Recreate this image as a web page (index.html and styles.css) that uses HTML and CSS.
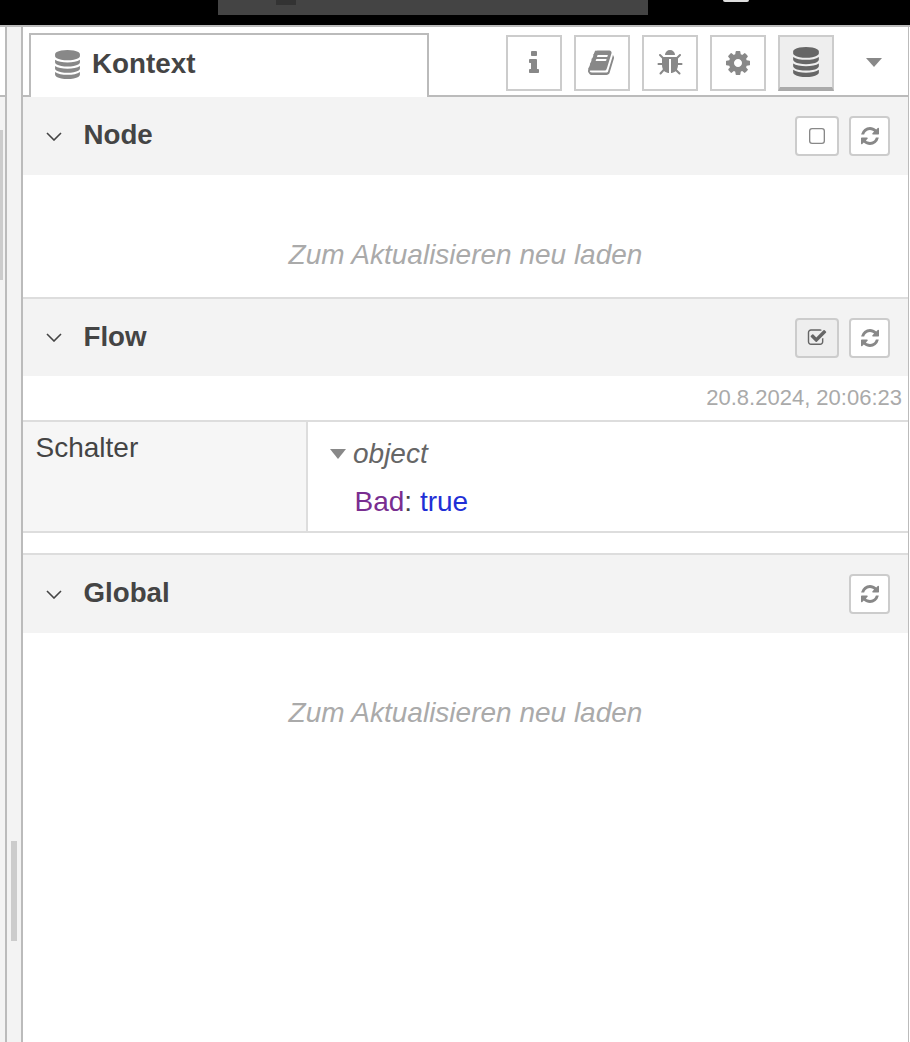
FILE: index.html
```html
<!DOCTYPE html>
<html lang="de">
<head>
<meta charset="utf-8">
<title>Kontext</title>
<link rel="stylesheet" href="styles.css">
</head>
<body>
<svg class="sprite" aria-hidden="true">
  <symbol id="i-db" viewBox="0 0 1536 1792"><path d="M768 768q237 0 443-43t325-127v170q0 69-103 128t-280 93.5-385 34.5-385-34.5-280-93.5-103-128v-170q119 84 325 127t443 43zm0 768q237 0 443-43t325-127v170q0 69-103 128t-280 93.5-385 34.5-385-34.5-280-93.5-103-128v-170q119 84 325 127t443 43zm0-384q237 0 443-43t325-127v170q0 69-103 128t-280 93.5-385 34.5-385-34.5-280-93.5-103-128v-170q119 84 325 127t443 43zm0-1152q208 0 385 34.5t280 93.5 103 128v128q0 69-103 128t-280 93.5-385 34.5-385-34.5-280-93.5-103-128v-128q0-69 103-128t280-93.5 385-34.5z"/></symbol>
  <symbol id="i-info" viewBox="576 0 704 1792"><path d="M1216 1344v128q0 26-19 45t-45 19h-512q-26 0-45-19t-19-45v-128q0-26 19-45t45-19h64v-384h-64q-26 0-45-19t-19-45v-128q0-26 19-45t45-19h384q26 0 45 19t19 45v576h64q26 0 45 19t19 45zm-128-1152v192q0 26-19 45t-45 19h-256q-26 0-45-19t-19-45v-192q0-26 19-45t45-19h256q26 0 45 19t19 45z"/></symbol>
  <symbol id="i-book" viewBox="0 0 1792 1792"><path d="M1639 478q40 57 18 129l-275 906q-19 64-76.5 107.5t-122.5 43.5h-923q-77 0-148.5-53.5t-99.5-131.5q-24-67-2-127 0-4 3-27t4-37q1-8-3-21.5t-3-19.5q2-11 8-21t16.5-23.5 16.5-23.5q23-38 45-91.5t30-91.5q3-10 .5-30t-.5-28q3-11 17-28t17-23q21-36 42-92t25-90q1-9-2.5-32t.5-28q4-13 22-30.5t22-22.5q19-26 42.5-84.5t27.5-96.5q1-8-3-25.5t-2-26.5q2-8 9-18t18-23 17-21q8-12 16.5-35t15-43.5 16-44.5 19.5-36 27-25.5 36-12.5 46.5 4.5l-1 2q39-9 52-9h761q74 0 114 56t18 130l-274 906q-36 119-71.5 153.5t-128.5 34.5h-869q-27 0-38 15-11 16-1 43 24 70 144 70h923q29 0 56-15.5t35-41.5l300-987q7-22 5-57 38 15 59 43zm-1064 2q-4 13 2 22.5t20 9.5h608q13 0 25.5-9.5t16.5-22.5l21-64q4-13-2-22.5t-20-9.5h-608q-13 0-25.5 9.5t-16.5 22.5zm-83 256q-4 13 2 22.5t20 9.5h608q13 0 25.5-9.5t16.5-22.5l21-64q4-13-2-22.5t-20-9.5h-608q-13 0-25.5 9.5t-16.5 22.5z"/></symbol>
  <symbol id="i-bug" viewBox="0 0 1792 1792"><path d="M1696 960q0 26-19 45t-45 19h-224q0 171-67 290l208 209q19 19 19 45t-19 45q-18 19-45 19t-45-19l-198-197q-5 5-15 13t-42 28.5-65 36.5-82 29-97 13v-896h-128v896q-51 0-101.5-13.5t-87-33-66-39-43.5-32.5l-15-14-183 207q-20 21-48 21-24 0-43-16-19-18-20.5-44.5t15.5-46.5l202-227q-58-114-58-274h-224q-26 0-45-19t-19-45 19-45 45-19h224v-294l-173-173q-19-19-19-45t19-45 45-19 45 19l173 173h844l173-173q19-19 45-19t45 19 19 45-19 45l-173 173v294h224q26 0 45 19t19 45zm-480-576h-640q0-133 93.5-226.5t226.5-93.5 226.5 93.5 93.5 226.5z"/></symbol>
  <symbol id="i-cog" viewBox="128 128 1536 1536"><path d="M1152 896q0-106-75-181t-181-75-181 75-75 181 75 181 181 75 181-75 75-181zm512-109v222q0 12-8 23t-20 13l-185 28q-19 54-39 91 35 50 107 138 10 12 10 25t-9 23q-27 37-99 108t-94 71q-12 0-26-9l-138-108q-44 23-91 38-16 136-29 186-7 28-36 28h-222q-14 0-24.5-8.5t-11.5-21.5l-28-184q-49-16-90-37l-141 107q-10 9-25 9-14 0-25-11-126-114-165-168-7-10-7-23 0-12 8-23 15-21 51-66.5t54-70.5q-27-50-41-99l-183-27q-13-2-21-12.5t-8-23.5v-222q0-12 8-23t19-13l186-28q14-46 39-92-40-57-107-138-10-12-10-24 0-10 9-23 26-36 98.5-107.5t94.5-71.5q13 0 26 10l138 107q44-23 91-38 16-136 29-186 7-28 36-28h222q14 0 24.5 8.5t11.5 21.5l28 184q49 16 90 37l142-107q9-9 24-9 13 0 25 10 129 119 165 170 7 8 7 22 0 12-8 23-15 21-51 66.5t-54 70.5q26 50 41 98l183 28q13 2 21 12.5t8 23.5z"/></symbol>
  <symbol id="i-refresh" viewBox="128 128 1536 1536"><path d="M1639 1056q0 5-1 7-64 268-268 434.5t-478 166.5q-146 0-282.5-55t-243.5-157l-129 129q-19 19-45 19t-45-19-19-45v-448q0-26 19-45t45-19h448q26 0 45 19t19 45-19 45l-137 137q71 66 161 102t187 36q134 0 250-65t186-179q11-17 53-117 8-23 30-23h192q13 0 22.5 9.5t9.5 22.5zm25-800v448q0 26-19 45t-45 19h-448q-26 0-45-19t-19-45 19-45l138-138q-148-137-349-137-134 0-250 65t-186 179q-11 17-53 117-8 23-30 23h-199q-13 0-22.5-9.5t-9.5-22.5v-7q65-268 270-434.5t480-166.5q146 0 284 55.5t245 156.5l130-129q19-19 45-19t45 19 19 45z"/></symbol>
  <symbol id="i-square" viewBox="128 128 1536 1536"><rect x="192" y="192" width="1408" height="1408" rx="230" fill="none" stroke="currentColor" stroke-width="128"/></symbol>
  <symbol id="i-check" viewBox="0 96 1792 1536"><path d="M1472 930v318q0 119-84.5 203.5t-203.5 84.5h-832q-119 0-203.5-84.5t-84.5-203.5v-832q0-119 84.5-203.5t203.5-84.5h832q63 0 117 25 15 7 18 23 3 17-9 29l-49 49q-10 10-23 10-3 0-9-2-23-6-45-6h-832q-66 0-113 47t-47 113v832q0 66 47 113t113 47h832q66 0 113-47t47-113v-254q0-13 9-22l64-64q10-10 23-10 6 0 12 3 20 8 20 29zm231-489l-814 814q-24 24-57 24t-57-24l-430-430q-24-24-24-57t24-57l110-110q24-24 57-24t57 24l263 263 647-647q24-24 57-24t57 24l110 110q24 24 24 57t-24 57z"/></symbol>
</svg>

<header class="topbar">
  <div class="window-bar"><span class="window-knob"></span></div>
  <span class="top-pill"></span>
</header>

<div class="workspace">
  <aside class="left-edge">
    <div class="edge-top"></div>
    <div class="edge-bottom"><span class="edge-thumb"></span></div>
  </aside>
  <div class="separator"><span class="separator-thumb"></span></div>

  <main class="panel">
    <nav class="tabbar">
      <div class="tab">
        <svg class="tab-icon"><use href="#i-db"/></svg>
        <span class="tab-label">Kontext</span>
      </div>
      <div class="tab-buttons">
        <button class="tab-btn"><svg class="icon-info"><use href="#i-info"/></svg></button>
        <button class="tab-btn"><svg class="icon-book"><use href="#i-book"/></svg></button>
        <button class="tab-btn"><svg class="icon-bug"><use href="#i-bug"/></svg></button>
        <button class="tab-btn"><svg class="icon-cog"><use href="#i-cog"/></svg></button>
        <button class="tab-btn tab-btn-active"><svg class="icon-db"><use href="#i-db"/></svg></button>
        <span class="tab-caret"></span>
      </div>
    </nav>

    <section class="section">
      <header class="section-head">
        <svg class="chevron" viewBox="0 0 16 9"><path d="M1 1l7 7 7-7"/></svg>
        <h2 class="section-title">Node</h2>
        <div class="section-actions">
          <button class="mini-btn mini-wide"><svg class="icon-square"><use href="#i-square"/></svg></button>
          <button class="mini-btn"><svg class="icon-refresh"><use href="#i-refresh"/></svg></button>
        </div>
      </header>
      <div class="placeholder placeholder-node">Zum Aktualisieren neu laden</div>
    </section>

    <section class="section section-ruled">
      <header class="section-head section-head-flow">
        <svg class="chevron" viewBox="0 0 16 9"><path d="M1 1l7 7 7-7"/></svg>
        <h2 class="section-title">Flow</h2>
        <div class="section-actions">
          <button class="mini-btn mini-wide mini-on"><svg class="icon-check"><use href="#i-check"/></svg></button>
          <button class="mini-btn"><svg class="icon-refresh"><use href="#i-refresh"/></svg></button>
        </div>
      </header>
      <div class="stamp">20.8.2024, 20:06:23</div>
      <div class="ctx-row">
        <div class="ctx-key">Schalter</div>
        <div class="ctx-value">
          <div class="ctx-type"><span class="ctx-caret"></span><em>object</em></div>
          <div class="ctx-prop"><span class="prop-name">Bad</span>: <span class="prop-bool">true</span></div>
        </div>
      </div>
    </section>

    <section class="section section-ruled section-global">
      <header class="section-head">
        <svg class="chevron" viewBox="0 0 16 9"><path d="M1 1l7 7 7-7"/></svg>
        <h2 class="section-title">Global</h2>
        <div class="section-actions">
          <button class="mini-btn"><svg class="icon-refresh"><use href="#i-refresh"/></svg></button>
        </div>
      </header>
      <div class="placeholder placeholder-global">Zum Aktualisieren neu laden</div>
    </section>
  </main>
</div>
</body>
</html>
```

FILE: styles.css
```css
* { box-sizing: border-box; }

html, body {
  margin: 0;
  height: 1042px;
  overflow: hidden;
  background: #fff;
  color: #444;
  font-family: "Liberation Sans", Arial, sans-serif;
}

svg { display: block; fill: currentColor; }
.sprite { width: 0; height: 0; position: absolute; }

.topbar {
  height: 25px;
  background: #000;
  display: flex;
  align-items: flex-start;
}
.window-bar {
  width: 430px;
  height: 15px;
  margin-left: 218px;
  background: #444;
  padding-left: 58px;
}
.window-knob { display: block; width: 20px; height: 5px; background: #333; }
.top-pill {
  width: 26px;
  height: 2px;
  margin-left: 75px;
  background: #ddd;
  border-radius: 0 0 4px 4px;
}

.workspace {
  display: flex;
  height: 1017px;
  border-top: 2px solid #bbb;
}

.left-edge { width: 5px; display: flex; flex-direction: column; flex: none; }
.edge-top { height: 70px; background: #fff; border-bottom: 2px solid #bbb; margin-right: -2px; }
.edge-bottom { flex: 1; background: #f3f3f3; padding-top: 33px; }
.edge-thumb { display: block; width: 3px; height: 150px; background: #ccc; }

.separator {
  width: 18px;
  flex: none;
  background: #f3f3f3;
  border-left: 2px solid #bbb;
  border-right: 2px solid #bbb;
  padding: 814px 4px 0;
}
.separator-thumb { display: block; width: 6px; height: 100px; background: #ccc; }

.panel {
  flex: 1;
  min-width: 0;
  margin-right: 1px;
  border-right: 1px solid #bbb;
  display: flex;
  flex-direction: column;
}

.tabbar {
  height: 70px;
  display: flex;
  align-items: flex-start;
  border-bottom: 2px solid #bbb;
  padding: 6px 0 0 6px;
}
.tab {
  width: 400px;
  height: 64px;
  background: #fff;
  border: 2px solid #bbb;
  border-bottom: 0;
  display: flex;
  align-items: center;
  padding: 0 0 4px 24px;
  gap: 12px;
}
.tab-icon { width: 25px; height: 29px; color: #888; flex: none; margin-top: 1px; }
.tab-label { font-size: 27.8px; font-weight: 700; color: #444; }

.tab-buttons {
  display: flex;
  gap: 12px;
  margin-left: 77px;
  margin-top: 2px;
}
.tab-btn {
  width: 56px;
  height: 56px;
  padding: 0;
  background: #fff;
  border: 2px solid #ccc;
  color: #888;
  display: flex;
  align-items: center;
  justify-content: center;
}
.tab-btn-active {
  background: #eee;
  color: #666;
  border-bottom: 4px solid #aaa;
}
.tab-caret {
  width: 0;
  height: 0;
  margin: 23px 0 0 20px;
  border-left: 8px solid transparent;
  border-right: 8px solid transparent;
  border-top: 9px solid #888;
}

.icon-info { width: 11px; height: 28px; }
.icon-book { width: 28px; height: 28px; }
.icon-bug { width: 28px; height: 28px; }
.icon-cog { width: 24px; height: 24px; }
.icon-db { width: 26px; height: 30px; }
.icon-square { width: 16px; height: 16px; color: #888; }
.icon-refresh { width: 18px; height: 18px; color: #888; }
.icon-check { width: 20px; height: 17px; color: #666; }

.section-ruled { border-top: 2px solid #ddd; }
.section-head {
  height: 78px;
  background: #f3f3f3;
  display: flex;
  align-items: center;
  padding: 0 18px 0 23px;
}
.section-head-flow { height: 77px; }
.chevron {
  width: 16px;
  height: 9px;
  fill: none;
  stroke: #444;
  stroke-width: 1.6;
  flex: none;
}
.section-title {
  margin: 0 0 2px 21.5px;
  font-size: 27.7px;
  font-weight: 700;
  color: #444;
}
.section-actions { margin-left: auto; display: flex; gap: 10px; }
.mini-btn {
  width: 41px;
  height: 40px;
  padding: 0;
  background: #fff;
  border: 2px solid #ccc;
  border-radius: 4px;
  display: flex;
  align-items: center;
  justify-content: center;
}
.mini-wide { width: 44px; }
.mini-on { background: #eee; }

.placeholder {
  text-align: center;
  font-size: 28px;
  font-style: italic;
  color: #aaa;
  line-height: 32px;
}
.placeholder-node { height: 122px; padding-top: 64px; }
.placeholder-global { padding-top: 64px; }

.stamp {
  height: 44px;
  text-align: right;
  padding-right: 6px;
  font-size: 22px;
  line-height: 44px;
  color: #aaa;
}
.ctx-row {
  display: flex;
  height: 113px;
  border-top: 2px solid #ddd;
  border-bottom: 2px solid #ddd;
}
.ctx-key {
  width: 285px;
  flex: none;
  background: #f6f6f6;
  border-right: 2px solid #ddd;
  padding: 10px 0 0 12.5px;
  font-size: 28px;
  line-height: 32px;
}
.ctx-value { padding: 16px 0 0 22px; font-size: 28px; line-height: 32px; }
.ctx-type { display: flex; align-items: center; color: #666; }
.ctx-type em { margin-left: 7px; }
.ctx-caret {
  width: 0;
  height: 0;
  border-left: 8px solid transparent;
  border-right: 8px solid transparent;
  border-top: 10px solid #888;
}
.ctx-prop { margin: 16px 0 0 24.5px; color: #444; }
.prop-name { color: #792e90; }
.prop-bool { color: #1f2fd6; }

.section-global { margin-top: 20px; }
```
